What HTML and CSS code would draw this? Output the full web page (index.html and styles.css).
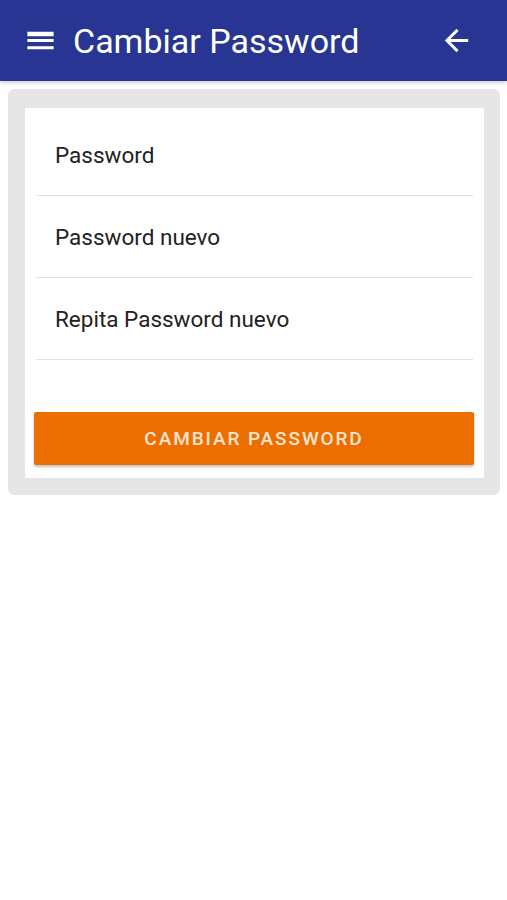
FILE: index.html
```html
<!DOCTYPE html>
<html lang="es">
<head>
<meta charset="utf-8">
<title>Cambiar Password</title>
<link rel="stylesheet" href="styles.css">
</head>
<body>
<header class="appbar">
  <svg class="icon" viewBox="0 0 24 24" aria-hidden="true"><path d="M3 18h18v-2H3v2zm0-5h18v-2H3v2zm0-6v2h18V6H3z" fill="#fff"/></svg>
  <h1 class="title">Cambiar Password</h1>
  <svg class="icon back" viewBox="0 0 24 24" aria-hidden="true"><path d="M20 11H7.83l5.59-5.59L12 4l-8 8 8 8 1.41-1.41L7.83 13H20v-2z" fill="#fff"/></svg>
</header>
<main class="content">
  <section class="card">
    <div class="panel">
      <div class="field">Password</div>
      <div class="field">Password nuevo</div>
      <div class="field">Repita Password nuevo</div>
      <button class="btn">CAMBIAR PASSWORD</button>
    </div>
  </section>
</main>
</body>
</html>
```
FILE: styles.css
```css
* { box-sizing: border-box; }
body {
  margin: 0;
  background: #fff;
  font-family: Roboto, "Liberation Sans", sans-serif;
}
.appbar {
  height: 81px;
  background: #283593;
  display: flex;
  align-items: center;
  padding: 0 33px 0 23px;
  box-shadow: 0 2px 4px rgba(0,0,0,0.18);
  position: relative;
}
.icon {
  width: 35px;
  height: 35px;
  flex: none;
}
.title {
  margin: 0 0 0 15px;
  flex: 1;
  color: #fff;
  font-size: 34px;
  font-weight: 400;
  line-height: 1;
}
.content {
  padding: 8px 7px 0 8px;
}
.card {
  background: #e6e6e6;
  border-radius: 6px;
  padding: 19px 16px 17px 17px;
}
.panel {
  background: #fff;
  padding: 6px 10px 13px 9px;
  display: flex;
  flex-direction: column;
}
.field {
  height: 82px;
  margin: 0 1px 0 2px;
  border-bottom: 1px solid #e2e2e2;
  display: flex;
  align-items: center;
  padding-left: 19px;
  font-size: 22.5px;
  color: #222;
}
.btn {
  margin-top: 52px;
  height: 53px;
  border: 0;
  border-radius: 2px;
  background: #ec6d00;
  color: #fde6cf;
  font-family: Roboto, "Liberation Sans", sans-serif;
  font-weight: 500;
  font-size: 19px;
  letter-spacing: 1.9px;
  box-shadow: 0 2px 3px rgba(0,0,0,0.25);
}
```
